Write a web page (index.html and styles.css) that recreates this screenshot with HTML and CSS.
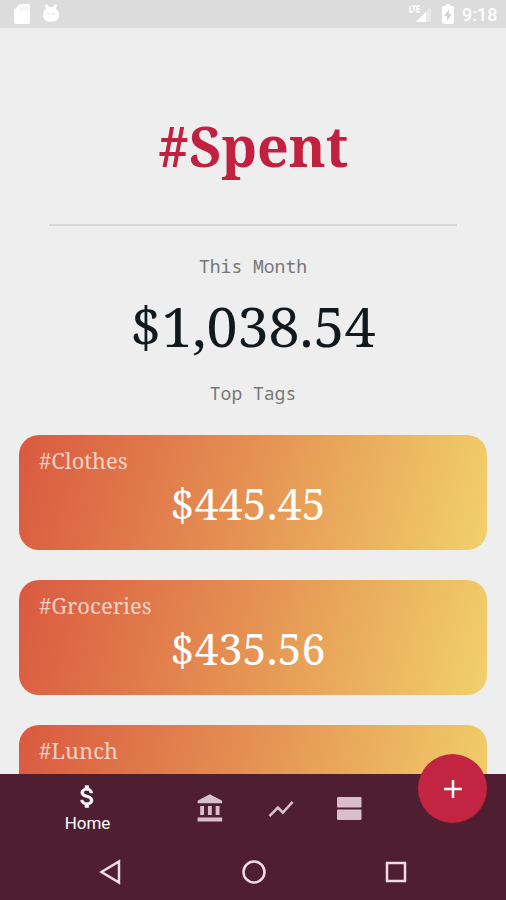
FILE: index.html
```html
<!DOCTYPE html>
<html lang="en">
<head>
    <meta charset="UTF-8">
    <meta name="viewport" content="width=device-width, initial-scale=1.0">
    <title>#Spent</title>
    <link rel="stylesheet" href="styles.css">
</head>
<body>
    <div class="app">
        <header class="status-bar">
            <svg class="icon-sd" width="16" height="20" viewBox="0 0 16 20"><path fill="#fff" d="M6 0h8q2 0 2 2v16q0 2-2 2H2q-2 0-2-2V6z"/><path stroke="#e6e6e6" stroke-width="1.5" d="M7 3v3M10 3v3M13 3v3"/></svg>
            <svg class="icon-droid" width="16" height="20" viewBox="0 0 16 20"><path fill="#fff" d="M2 1l2-1 2 3h4l2-3 2 1-1 4q3 2 3 6 0 7-8 7T0 11q0-4 3-6z"/><path stroke="#ddd" d="M4 10h3M9 10h3"/></svg>
            <div class="status-right">
                <svg width="25" height="20" viewBox="0 0 25 20"><path fill="#e8e8e8" d="M22 3v15H7z"/><path fill="#fff" d="M17 8v10H7z"/><path fill="none" stroke="#fff" stroke-width="1.3" d="M1 2v6h3M3 2h4M5 2v6M11 2H8v6h3M8 5h3"/></svg>
                <svg width="12" height="20" viewBox="0 0 12 20"><path fill="#fff" d="M4 0h4v2h2q2 0 2 2v14q0 2-2 2H2q-2 0-2-2V4q0-2 2-2h2z"/><path fill="#d5d5d5" d="M7 5l-5 7h3v5l5-7H7z"/></svg>
                <span class="clock">9:18</span>
            </div>
        </header>

        <main class="content">
            <h1>#Spent</h1>
            <hr>
            <p class="label">This Month</p>
            <p class="total">$1,038.54</p>
            <p class="label">Top Tags</p>

            <div class="cards">
                <div class="card">
                    <div class="tag">#Clothes</div>
                    <div class="amount">$445.45</div>
                </div>
                <div class="card">
                    <div class="tag">#Groceries</div>
                    <div class="amount">$435.56</div>
                </div>
                <div class="card">
                    <div class="tag">#Lunch</div>
                </div>
            </div>
        </main>

        <footer class="bottom">
            <nav class="tabs">
                <a class="tab active">
                    <svg width="29" height="29" viewBox="0 0 24 24"><path d="M11.8 10.9c-2.27-.59-3-1.2-3-2.15 0-1.09 1.01-1.85 2.7-1.85 1.78 0 2.44.85 2.5 2.1h2.21c-.07-1.72-1.12-3.3-3.21-3.81V3h-3v2.16c-1.94.42-3.5 1.68-3.5 3.61 0 2.31 1.91 3.46 4.7 4.13 2.5.6 3 1.48 3 2.41 0 .69-.49 1.79-2.7 1.79-2.06 0-2.87-.92-2.98-2.1h-2.2c.12 2.19 1.76 3.42 3.68 3.83V21h3v-2.15c1.95-.37 3.5-1.5 3.5-3.55 0-2.84-2.43-3.81-4.7-4.4z"/></svg>
                    <span>Home</span>
                </a>
                <a class="tab">
                    <svg width="31" height="31" viewBox="0 0 24 24"><path d="M4 10v7h3v-7H4zm6 0v7h3v-7h-3zM2 22h19v-3H2v3zm14-12v7h3v-7h-3zm-4.5-9L2 6v2h19V6l-9.500-5z"/></svg>
                </a>
                <a class="tab">
                    <svg width="30" height="30" viewBox="0 0 24 24"><path d="M3.500 18.490l6-6.010 4 4L22 6.920l-1.410-1.410-7.090 7.970-4-4L2 16.990z"/></svg>
                </a>
                <a class="tab">
                    <svg width="32" height="32" viewBox="0 0 32 32"><rect x="4" y="4" width="24.500" height="10.500" rx="1"/><rect x="4" y="16.500" width="24.500" height="10.500" rx="1"/></svg>
                </a>
            </nav>
            <div class="system-nav">
                <svg width="24" height="26" viewBox="0 0 24 26"><path d="M20 2.500v21L2.500 13z"/></svg>
                <svg width="26" height="26" viewBox="0 0 26 26"><circle cx="13" cy="13" r="10.500"/></svg>
                <svg width="24" height="26" viewBox="0 0 24 26"><rect x="3" y="4" width="18" height="18"/></svg>
            </div>
            <button class="fab" aria-label="Add">
                <svg width="18" height="18" viewBox="0 0 18 18"><path d="M9 0v18M0 9h18"/></svg>
            </button>
        </footer>
    </div>
</body>
</html>
```

FILE: styles.css
```css
* {
    margin: 0;
    padding: 0;
    box-sizing: border-box;
}

body {
    background: #eee;
    font-family: "Noto Serif", "DejaVu Serif", serif;
}

.app {
    height: 900px;
    display: flex;
    flex-direction: column;
    overflow: hidden;
}

.status-bar {
    height: 28px;
    flex: none;
    background: #dcdcdc;
    display: flex;
    align-items: center;
    padding: 0 9px 0 14px;
}

.icon-droid {
    margin-left: 13px;
}

.status-right {
    margin-left: auto;
    display: flex;
    align-items: center;
    gap: 8px;
}

.clock {
    font: 500 18px Roboto, sans-serif;
    color: #fff;
    width: 35px;
    white-space: nowrap;
}

.content {
    flex: 1;
    min-height: 0;
    overflow: hidden;
    text-align: center;
    padding: 0 19px;
}

h1 {
    margin-top: 78px;
    color: #c2203f;
    font-size: 55.500px;
    line-height: 80px;
    font-weight: 700;
}

hr {
    margin: 38px 30px 0;
    border: 0;
    height: 2px;
    background: #d8d8d8;
}

.label {
    color: #777;
    font: 18px/24px "Noto Sans Mono", "DejaVu Sans Mono", monospace;
    margin-top: 28px;
}

.total {
    color: #10191d;
    font-size: 55.500px;
    line-height: 74px;
    margin-top: 11px;
}

.total + .label {
    margin-top: 18px;
}

.cards {
    display: flex;
    flex-direction: column;
    gap: 30px;
    margin-top: 30px;
}

.card {
    height: 115px;
    border-radius: 20px;
    padding: 9px 20px;
    background: linear-gradient(105deg, #da5940, #e59353 50%, #f1d16b);
    color: #fff;
}

.tag {
    text-align: left;
    font-size: 22px;
    line-height: 32px;
    color: rgba(255, 255, 255, 0.7);
}

.amount {
    font-size: 43px;
    line-height: 56px;
    padding-right: 10px;
}

.bottom {
    position: relative;
    flex: none;
    height: 126px;
    background: #4f1e30;
}

.tabs {
    height: 69px;
    padding-left: 36px;
    display: grid;
    grid-template-columns: 103px 142px 0 135px;
    align-items: center;
}

.tab {
    display: flex;
    flex-direction: column;
    align-items: center;
    fill: #d9bfcc;
}

.active {
    fill: #fff;
    stroke: #fff;
    stroke-width: 0.500;
    color: #fff;
    font: 17px/24px Roboto, sans-serif;
}

.system-nav {
    height: 57px;
    padding: 0 98px 0 99px;
    display: flex;
    align-items: center;
    justify-content: space-between;
    fill: none;
    stroke: #f0dce4;
    stroke-width: 2.500;
}

.fab {
    position: absolute;
    top: -20px;
    right: 19px;
    width: 69px;
    height: 69px;
    border: 0;
    border-radius: 50%;
    background: #c22442;
    display: flex;
    align-items: center;
    justify-content: center;
}

.fab svg {
    stroke: #fff;
    stroke-width: 2.500;
}
```
